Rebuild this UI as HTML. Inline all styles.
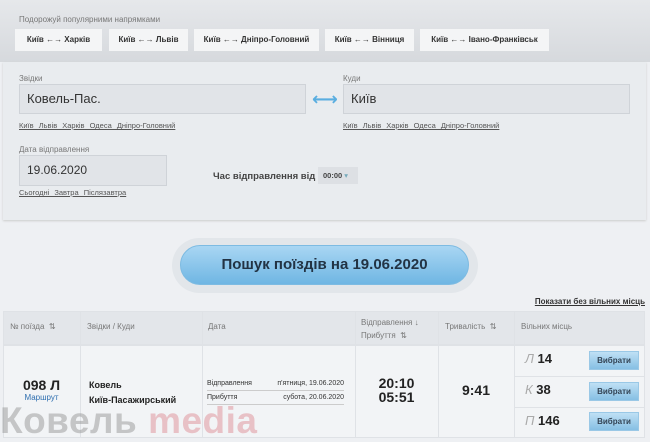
<!DOCTYPE html>
<html><head><meta charset="utf-8"><style>
*{margin:0;padding:0;box-sizing:border-box}
body{width:650px;height:442px;overflow:hidden;background:#eef0f3;font-family:"Liberation Sans","DejaVu Sans",sans-serif;position:relative;color:#222}
.a{position:absolute}
.top{left:0;top:0;width:650px;height:62px;background:linear-gradient(#e6e8eb,#d6d9dd)}
.chip{position:absolute;top:29px;height:22px;background:#f4f5f6;font-size:8px;font-weight:bold;color:#333;line-height:22px;text-align:center}
.panel{left:3px;top:62px;width:643px;height:158px;background:#e9ecef;box-shadow:0 1px 2px #ccc}
.lbl{font-size:8px;color:#777}
.inp{background:#e1e4e8;border:1px solid #cfd3d8;font-size:13px;color:#333;padding-left:7px}
.lnk{font-size:7.5px;color:#555;text-decoration:underline;word-spacing:3px}
.th{font-size:8px;color:#777}
.btn{position:absolute;left:589px;width:50px;height:19px;background:linear-gradient(#bfe0f5,#86bfe4);border:1px solid #9ac8e6;font-size:8px;font-weight:bold;color:#345;text-align:center;line-height:17px}
.vl{position:absolute;top:311px;width:1px;height:126px;background:#dfe2e6}
</style></head><body>
<div class="a top"></div>
<div class="a" style="left:19px;top:15px;font-size:8px;color:#777">Подорожуй популярними напрямками</div>
<div class="chip" style="left:15px;width:87px">Київ ←→ Харків</div>
<div class="chip" style="left:109px;width:79px">Київ ←→ Львів</div>
<div class="chip" style="left:194px;width:125px">Київ ←→ Дніпро-Головний</div>
<div class="chip" style="left:325px;width:89px">Київ ←→ Вінниця</div>
<div class="chip" style="left:420px;width:129px">Київ ←→ Івано-Франківськ</div>
<div class="a panel"></div>
<div class="a lbl" style="left:19px;top:74px">Звідки</div>
<div class="a inp" style="left:19px;top:84px;width:287px;height:30px;line-height:28px">Ковель-Пас.</div>
<div class="a" style="left:312px;top:89px;font-size:18px;color:#5aaee0;font-weight:bold">⟷</div>
<div class="a lbl" style="left:343px;top:74px">Куди</div>
<div class="a inp" style="left:343px;top:84px;width:287px;height:30px;line-height:28px">Київ</div>
<div class="a lnk" style="left:19px;top:121px">Київ Львів Харків Одеса Дніпро-Головний</div>
<div class="a lnk" style="left:343px;top:121px">Київ Львів Харків Одеса Дніпро-Головний</div>
<div class="a lbl" style="left:19px;top:145px">Дата відправлення</div>
<div class="a inp" style="left:19px;top:155px;width:148px;height:31px;line-height:29px;font-size:12px">19.06.2020</div>
<div class="a lnk" style="left:19px;top:188px">Сьогодні Завтра Післязавтра</div>
<div class="a" style="left:213px;top:171px;font-size:9.5px;font-weight:bold;color:#444">Час відправлення від</div>
<div class="a" style="left:318px;top:167px;width:40px;height:17px;background:#dde0e4;font-size:7.5px;font-weight:bold;color:#444;line-height:17px;padding-left:5px">00:00 <span style="color:#7ab">▾</span></div>
<div class="a" style="left:172px;top:238px;width:306px;height:55px;border-radius:28px;background:#e2e6ea"></div>
<div class="a" style="left:180px;top:245px;width:289px;height:40px;border-radius:20px;background:linear-gradient(#a9d6f3,#6fb6e3);border:1px solid #7dbbe2;text-align:center;line-height:38px;font-size:15px;font-weight:bold;color:#234">Пошук поїздів на 19.06.2020</div>
<div class="a" style="right:5px;top:297px;font-size:8px;font-weight:bold;color:#333;text-decoration:underline">Показати без вільних місць</div>
<div class="a" style="left:3px;top:311px;width:642px;height:34px;background:#e3e6ea;border:1px solid #dfe2e6"></div>
<div class="a" style="left:3px;top:345px;width:642px;height:93px;background:#f2f4f6;border:1px solid #dfe2e6"></div>
<div class="vl" style="left:80px"></div><div class="vl" style="left:202px"></div><div class="vl" style="left:355px"></div><div class="vl" style="left:438px"></div><div class="vl" style="left:514px"></div>
<div class="a th" style="left:10px;top:322px">№ поїзда &nbsp;⇅</div>
<div class="a th" style="left:87px;top:322px">Звідки / Куди</div>
<div class="a th" style="left:208px;top:322px">Дата</div>
<div class="a th" style="left:361px;top:316px;line-height:13px">Відправлення ↓<br>Прибуття &nbsp;⇅</div>
<div class="a th" style="left:445px;top:322px">Тривалість &nbsp;⇅</div>
<div class="a th" style="left:521px;top:322px">Вільних місць</div>
<div class="a" style="left:3px;top:377px;width:77px;text-align:center;font-size:14px;font-weight:bold">098 Л</div>
<div class="a" style="left:3px;top:393px;width:77px;text-align:center;font-size:8px;color:#2f6fb0">Маршрут</div>
<div class="a" style="left:89px;top:378px;font-size:9px;font-weight:bold;line-height:15px">Ковель<br>Київ-Пасажирський</div>
<div class="a" style="left:207px;top:380px;width:137px;font-size:7px;color:#333;border-bottom:1px solid #ccc;height:11px">Відправлення<span style="float:right">п'ятниця, 19.06.2020</span></div>
<div class="a" style="left:207px;top:394px;width:137px;font-size:7px;color:#333;border-bottom:1px solid #ccc;height:11px">Прибуття<span style="float:right">субота, 20.06.2020</span></div>
<div class="a" style="left:355px;top:376px;width:83px;text-align:center;font-size:14px;font-weight:bold;line-height:14px">20:10<br>05:51</div>
<div class="a" style="left:438px;top:382px;width:76px;text-align:center;font-size:14px;font-weight:bold">9:41</div>
<div class="a" style="left:514px;top:376px;width:131px;height:1px;background:#dfe2e6"></div>
<div class="a" style="left:514px;top:407px;width:131px;height:1px;background:#dfe2e6"></div>
<div class="a" style="left:525px;top:351px;font-size:13px"><i style="color:#aaa">Л</i> <b>14</b></div>
<div class="a" style="left:525px;top:382px;font-size:13px"><i style="color:#aaa">К</i> <b>38</b></div>
<div class="a" style="left:525px;top:413px;font-size:13px"><i style="color:#aaa">П</i> <b>146</b></div>
<div class="btn" style="top:351px">Вибрати</div>
<div class="btn" style="top:382px">Вибрати</div>
<div class="btn" style="top:412px">Вибрати</div>
<div class="a" style="left:0px;top:400px;font-size:37px;font-weight:bold;line-height:42px;letter-spacing:0.5px"><span style="color:rgba(150,150,150,0.5)">Ковель</span> <span style="color:rgba(220,130,140,0.45)">media</span></div>
</body></html>
